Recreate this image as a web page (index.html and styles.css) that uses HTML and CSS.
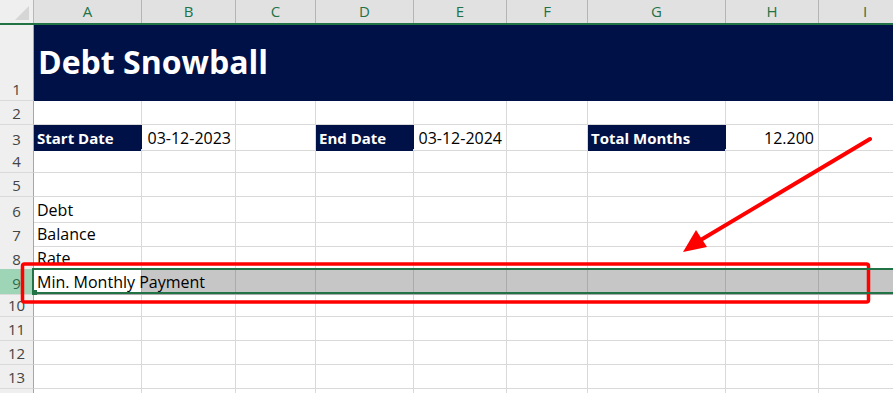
FILE: index.html
```html
<!DOCTYPE html>
<html lang="en">
<head>
    <meta charset="UTF-8">
    <meta name="viewport" content="width=device-width, initial-scale=1.0">
    <title>Debt Snowball</title>
    <link rel="stylesheet" href="styles.css">
</head>
<body>
    <div class="sheet">
        <div class="row head">
            <div class="corner"><div class="tri"></div></div>
            <div class="col">A</div>
            <div class="col">B</div>
            <div class="col">C</div>
            <div class="col">D</div>
            <div class="col">E</div>
            <div class="col">F</div>
            <div class="col">G</div>
            <div class="col">H</div>
            <div class="col">I</div>
        </div>

        <div class="row title">
            <div class="num">1</div>
            <div class="banner">Debt Snowball</div>
        </div>

        <div class="row">
            <div class="num">2</div>
            <div class="cell"></div><div class="cell"></div><div class="cell"></div>
            <div class="cell"></div><div class="cell"></div><div class="cell"></div>
            <div class="cell"></div><div class="cell"></div><div class="cell"></div>
        </div>

        <div class="row">
            <div class="num">3</div>
            <div class="cell label">Start Date</div>
            <div class="cell right">03-12-2023</div>
            <div class="cell"></div>
            <div class="cell label">End Date</div>
            <div class="cell right">03-12-2024</div>
            <div class="cell"></div>
            <div class="cell label">Total Months</div>
            <div class="cell right">12.200</div>
            <div class="cell"></div>
        </div>

        <div class="row">
            <div class="num">4</div>
            <div class="cell"></div><div class="cell"></div><div class="cell"></div>
            <div class="cell"></div><div class="cell"></div><div class="cell"></div>
            <div class="cell"></div><div class="cell"></div><div class="cell"></div>
        </div>

        <div class="row">
            <div class="num">5</div>
            <div class="cell"></div><div class="cell"></div><div class="cell"></div>
            <div class="cell"></div><div class="cell"></div><div class="cell"></div>
            <div class="cell"></div><div class="cell"></div><div class="cell"></div>
        </div>

        <div class="row">
            <div class="num">6</div>
            <div class="cell">Debt</div><div class="cell"></div><div class="cell"></div>
            <div class="cell"></div><div class="cell"></div><div class="cell"></div>
            <div class="cell"></div><div class="cell"></div><div class="cell"></div>
        </div>

        <div class="row">
            <div class="num">7</div>
            <div class="cell">Balance</div><div class="cell"></div><div class="cell"></div>
            <div class="cell"></div><div class="cell"></div><div class="cell"></div>
            <div class="cell"></div><div class="cell"></div><div class="cell"></div>
        </div>

        <div class="row">
            <div class="num">8</div>
            <div class="cell">Rate</div><div class="cell"></div><div class="cell"></div>
            <div class="cell"></div><div class="cell"></div><div class="cell"></div>
            <div class="cell"></div><div class="cell"></div><div class="cell"></div>
        </div>

        <div class="row selected">
            <div class="num">9</div>
            <div class="cell active">Min. Monthly Payment</div><div class="cell"></div><div class="cell"></div>
            <div class="cell"></div><div class="cell"></div><div class="cell"></div>
            <div class="cell"></div><div class="cell"></div><div class="cell"></div>
        </div>

        <div class="row">
            <div class="num">10</div>
            <div class="cell"></div><div class="cell"></div><div class="cell"></div>
            <div class="cell"></div><div class="cell"></div><div class="cell"></div>
            <div class="cell"></div><div class="cell"></div><div class="cell"></div>
        </div>

        <div class="row">
            <div class="num">11</div>
            <div class="cell"></div><div class="cell"></div><div class="cell"></div>
            <div class="cell"></div><div class="cell"></div><div class="cell"></div>
            <div class="cell"></div><div class="cell"></div><div class="cell"></div>
        </div>

        <div class="row">
            <div class="num">12</div>
            <div class="cell"></div><div class="cell"></div><div class="cell"></div>
            <div class="cell"></div><div class="cell"></div><div class="cell"></div>
            <div class="cell"></div><div class="cell"></div><div class="cell"></div>
        </div>

        <div class="row">
            <div class="num">13</div>
            <div class="cell"></div><div class="cell"></div><div class="cell"></div>
            <div class="cell"></div><div class="cell"></div><div class="cell"></div>
            <div class="cell"></div><div class="cell"></div><div class="cell"></div>
        </div>

        <div class="row">
            <div class="num"></div>
            <div class="cell"></div><div class="cell"></div><div class="cell"></div>
            <div class="cell"></div><div class="cell"></div><div class="cell"></div>
            <div class="cell"></div><div class="cell"></div><div class="cell"></div>
        </div>
    </div>

    <!-- annotation drawn on top of the screenshot -->
    <svg class="marks" width="893" height="393" viewBox="0 0 893 393">
        <rect x="22.5" y="264" width="846" height="38" rx="2" fill="none" stroke="#ff0000" stroke-width="3.5"/>
        <line x1="870" y1="139" x2="699" y2="241" stroke="#ff0000" stroke-width="4" stroke-linecap="round"/>
        <polygon points="683,252 707,247 696,230" fill="#ff0000"/>
    </svg>
</body>
</html>
```

FILE: styles.css
```css
:root {
    --grid: #d9d9d9;
    --navy: #001148;
    --excel-green: #217346;
    --cols: 34px 108px 94px 80px 98px 93px 81px 138px 93px 93px;
}

body {
    margin: 0;
    width: 893px;
    height: 393px;
    overflow: hidden;
    position: relative;
    background: #fff;
    font-family: "Open Sans", "Noto Sans", sans-serif;
}

.sheet {
    width: 911px;
}

.row {
    display: grid;
    grid-template-columns: var(--cols);
    height: 24px;
}

.head {
    height: 25px;
    background: #e1e1e1;
    border-bottom: 2px solid var(--excel-green);
    box-sizing: border-box;
}

.corner {
    background: #efefef;
    border-right: 1px solid #b8b8b8;
    position: relative;
}

.tri {
    position: absolute;
    right: 4px;
    bottom: 3px;
    width: 0;
    height: 0;
    border-left: 14px solid transparent;
    border-bottom: 14px solid #d6d6d6;
}

.col {
    border-right: 1px solid #b4b4b4;
    color: var(--excel-green);
    font-size: 15px;
    line-height: 23px;
    text-align: center;
}

.num {
    background: #efefef;
    border-right: 1px solid #a6a6a6;
    border-bottom: 1px solid #dadada;
    box-sizing: border-box;
    color: #444;
    font-size: 15px;
    text-align: center;
    display: flex;
    align-items: flex-end;
    justify-content: center;
    line-height: 20px;
    padding-bottom: 1px;
}

.cell {
    border-right: 1px solid var(--grid);
    border-bottom: 1px solid var(--grid);
    box-sizing: border-box;
    font-size: 16px;
    line-height: 24px;
    padding: 1px 4px 0 3px;
    color: #000;
    white-space: nowrap;
}

.cell.label {
    background: var(--navy);
    color: #fff;
    font-weight: 700;
    font-size: 15px;
    padding-left: 3px;
    border-color: var(--navy);
}

.cell.right {
    text-align: right;
}

.title {
    height: 76px;
}

.banner {
    grid-column: 2 / -1;
    background: var(--navy);
    color: #fff;
    font-size: 32px;
    font-weight: 700;
    line-height: 40px;
    padding: 17px 0 0 4px;
}

/* row 9 is selected */
.selected {
    position: relative;
}

.selected .num {
    background: #9fd5b7;
    color: #2f6b4a;
}

.selected .cell {
    background: #c6c6c6;
    border-right-color: #ababab;
    border-bottom-color: #ababab;
}

.selected .cell.active {
    background: #fff;
    position: relative;
    z-index: 1;
    overflow: visible;
}

.selected::after {
    content: "";
    position: absolute;
    left: 32px;
    top: -1px;
    right: 0;
    height: 26px;
    border: 2px solid var(--excel-green);
    box-sizing: border-box;
    z-index: 2;
}

.selected::before {
    content: "";
    position: absolute;
    left: 32px;
    top: 21px;
    width: 5px;
    height: 5px;
    background: var(--excel-green);
    z-index: 3;
}

.marks {
    position: absolute;
    top: 0;
    left: 0;
    pointer-events: none;
}
```
